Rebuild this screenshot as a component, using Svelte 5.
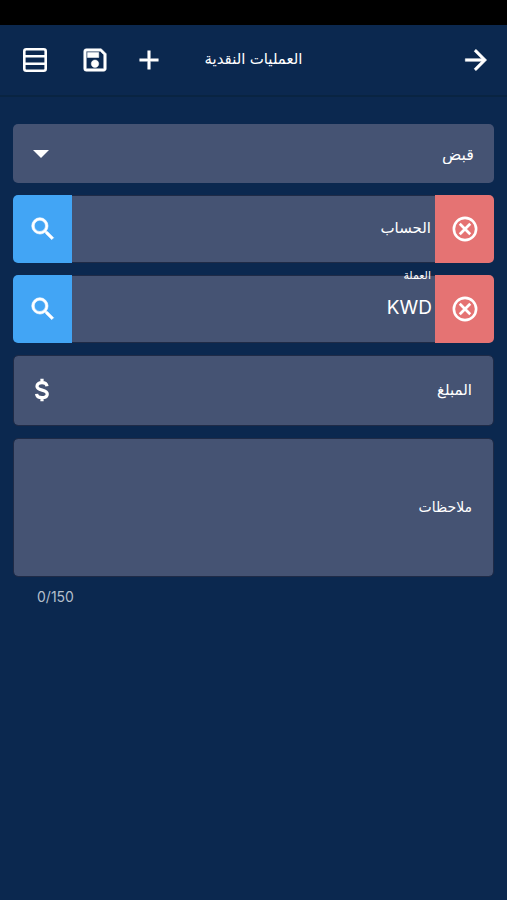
<script lang="ts">
	const MAX_NOTES = 150;

	let kind = $state('receipt');
	let account = $state('');
	let currency = $state('KWD');
	let amount = $state('');
	let notes = $state('');

	function reset() {
		kind = 'receipt';
		account = '';
		amount = '';
		notes = '';
	}
</script>

{#snippet searchIcon()}
	<svg width="30" height="30" viewBox="0 0 24 24" aria-hidden="true">
		<path
			fill="currentColor"
			stroke="currentColor"
			stroke-width="0.5"
			d="M15.5 14h-.79l-.28-.27A6.47 6.47 0 0 0 16 9.5 6.5 6.5 0 1 0 9.5 16c1.61 0 3.09-.59 4.23-1.57l.27.28v.79l5 4.99L20.49 19l-4.99-5zm-6 0C7.01 14 5 11.99 5 9.5S7.01 5 9.5 5 14 7.01 14 9.5 11.99 14 9.5 14z"
		/>
	</svg>
{/snippet}

{#snippet clearIcon()}
	<svg width="30" height="30" viewBox="0 0 24 24" aria-hidden="true">
		<circle cx="12" cy="12" r="8.9" fill="none" stroke="currentColor" stroke-width="2.1" />
		<path
			d="m7.800 7.800 8.400 8.400M16.200 7.800l-8.400 8.400"
			stroke="currentColor"
			stroke-width="2.200"
		/>
	</svg>
{/snippet}

<div class="page" dir="rtl" lang="ar">
	<div class="status-bar"></div>

	<header>
		<button class="icon-btn" type="button" aria-label="رجوع">
			<svg width="32" height="32" viewBox="0 0 24 24" aria-hidden="true">
				<path
					fill="currentColor"
					stroke="currentColor"
					stroke-width="0.4"
					d="m12 4-1.41 1.41L16.17 11H4v2h12.17l-5.58 5.59L12 20l8-8z"
				/>
			</svg>
		</button>
		<h1>العمليات النقدية</h1>
		<div class="actions">
			<button class="icon-btn" type="button" aria-label="جديد" onclick={reset}>
				<svg width="32" height="32" viewBox="0 0 24 24" aria-hidden="true">
					<path
						fill="currentColor"
						stroke="currentColor"
						stroke-width="0.3"
						d="M19 13h-6v6h-2v-6H5v-2h6V5h2v6h6z"
					/>
				</svg>
			</button>
			<button class="icon-btn save" type="button" aria-label="حفظ">
				<svg width="30" height="30" viewBox="0 0 24 24" aria-hidden="true">
					<path
						fill="currentColor"
						stroke="currentColor"
						stroke-width="0.4"
						d="M17 3H5a2 2 0 0 0-2 2v14a2 2 0 0 0 2 2h14c1.1 0 2-.9 2-2V7l-4-4zm2 16H5V5h11.17L19 7.83V19zm-7-7c-1.66 0-3 1.34-3 3s1.34 3 3 3 3-1.34 3-3-1.34-3-3-3zM6 6h9v4H6z"
					/>
				</svg>
			</button>
			<button class="icon-btn" type="button" aria-label="القائمة">
				<svg width="24" height="24" viewBox="0 0 24 24" aria-hidden="true">
					<rect x="1.3" y="1.3" width="21.4" height="21.4" rx="2" fill="none" stroke="currentColor" stroke-width="2.6" />
					<path d="M1 8.3h22M1 15.7h22" stroke="currentColor" stroke-width="2.4" />
				</svg>
			</button>
		</div>
	</header>

	<form>
		<div class="select-box">
			<select bind:value={kind} aria-label="نوع العملية">
				<option value="receipt">قبض</option>
				<option value="payment">دفع</option>
			</select>
			<span class="arrow"></span>
		</div>

		<div class="lookup">
			<button class="clear" type="button" aria-label="مسح الحساب" onclick={() => (account = '')}>
				{@render clearIcon()}
			</button>
			<div class="field">
				<input id="account" type="text" bind:value={account} />
				<label for="account" class:floating={account !== ''}>الحساب</label>
			</div>
			<button class="search" type="button" aria-label="بحث عن حساب">
				{@render searchIcon()}
			</button>
		</div>

		<div class="lookup">
			<button class="clear" type="button" aria-label="مسح العملة" onclick={() => (currency = '')}>
				{@render clearIcon()}
			</button>
			<div class="field">
				<input id="currency" type="text" bind:value={currency} />
				<label for="currency" class:floating={currency !== ''}>العملة</label>
			</div>
			<button class="search" type="button" aria-label="بحث عن عملة">
				{@render searchIcon()}
			</button>
		</div>

		<div class="field outlined amount">
			<input id="amount" type="text" inputmode="decimal" bind:value={amount} />
			<label for="amount" class:floating={amount !== ''}>المبلغ</label>
			<svg class="suffix" width="30" height="30" viewBox="0 0 24 24" aria-hidden="true">
				<path
					fill="none"
					stroke="currentColor"
					stroke-width="2.6"
					d="M16 9C15.8 7.1 14.3 6 12 6S8 7.100 8 8.900c0 4.100 8.200 2.200 8.200 6.300 0 1.800-1.700 2.900-4.200 2.900s-4.200-1.100-4.300-3M12 3v3M12 18v3"
				/>
			</svg>
		</div>

		<div class="field outlined notes">
			<textarea id="notes" maxlength={MAX_NOTES} bind:value={notes}></textarea>
			<label for="notes" class:floating={notes !== ''}>ملاحظات</label>
		</div>
		<div class="counter" dir="ltr">{notes.length}/{MAX_NOTES}</div>
	</form>
</div>

<style>
	:global(body) {
		background: #0b284f;
	}

	.page {
		min-height: 100vh;
		color: #fff;
		font-family: Inter, 'DejaVu Sans', sans-serif;
		font-size: 15px;
	}

	.status-bar {
		height: 25px;
		background: #000;
	}

	header {
		display: grid;
		grid-template-columns: 1fr auto 1fr;
		align-items: center;
		height: 70px;
		padding: 0 11px;
		border-bottom: 2px solid #092442;
	}

	h1 {
		margin: 0;
		padding-bottom: 3px;
		font-size: 15px;
		font-weight: 400;
		line-height: 24px;
	}

	.actions {
		display: flex;
		justify-content: flex-end;
		padding-left: 4px;
	}

	button {
		display: flex;
		align-items: center;
		justify-content: center;
		padding: 0;
		border: 0;
		background: none;
		color: #fff;
		cursor: pointer;
	}

	.icon-btn {
		width: 40px;
		height: 48px;
		flex: none;
	}

	.icon-btn.save {
		margin: 0 14px 0 20px;
	}

	form {
		display: flex;
		flex-direction: column;
		gap: 12px;
		padding: 27px 13px;
	}

	.select-box {
		position: relative;
		height: 59px;
	}

	select,
	input,
	textarea {
		display: block;
		box-sizing: border-box;
		width: 100%;
		height: 100%;
		margin: 0;
		border: 0;
		background: #455373;
		color: #fff;
		font: inherit;
		font-size: 19px;
		outline: none;
	}

	select {
		padding: 0 20px;
		border-radius: 5px;
		font-size: 16px;
		appearance: none;
	}

	.arrow {
		position: absolute;
		top: 26px;
		left: 20px;
		border: 8px solid transparent;
		border-top-color: #fff;
		border-bottom: 0;
		pointer-events: none;
	}

	.lookup {
		display: flex;
		height: 68px;
	}

	.lookup .field {
		flex: 1;
	}

	.lookup button {
		width: 59px;
		flex: none;
	}

	.search {
		border-radius: 5px 0 0 5px;
		background: #42a5f5;
	}

	.clear {
		border-radius: 0 5px 5px 0;
		background: #e57373;
	}

	.field {
		position: relative;
	}

	.field input,
	.field textarea {
		border: 1px solid #1f2b47;
		background-clip: padding-box;
	}

	.lookup input {
		padding: 0 3px 3px;
		border-width: 1px 0;
	}

	.outlined input,
	.outlined textarea {
		padding: 0 22px;
		border-radius: 5px;
		resize: none;
	}

	.outlined textarea {
		padding-top: 22px;
	}

	label {
		position: absolute;
		top: 50%;
		right: 4px;
		padding-bottom: 3px;
		line-height: 24px;
		transform: translateY(-50%);
		pointer-events: none;
	}

	.outlined label {
		right: 22px;
	}

	label.floating {
		top: 0;
		padding: 0;
		font-size: 11px;
	}

	.amount {
		height: 71px;
	}

	.suffix {
		position: absolute;
		top: 20px;
		left: 14px;
	}

	.notes {
		height: 139px;
	}

	.notes label {
		font-size: 14px;
	}

	.counter {
		padding: 0 24px;
		color: #b4bfcc;
		font-size: 14px;
		line-height: 16px;
	}
</style>
